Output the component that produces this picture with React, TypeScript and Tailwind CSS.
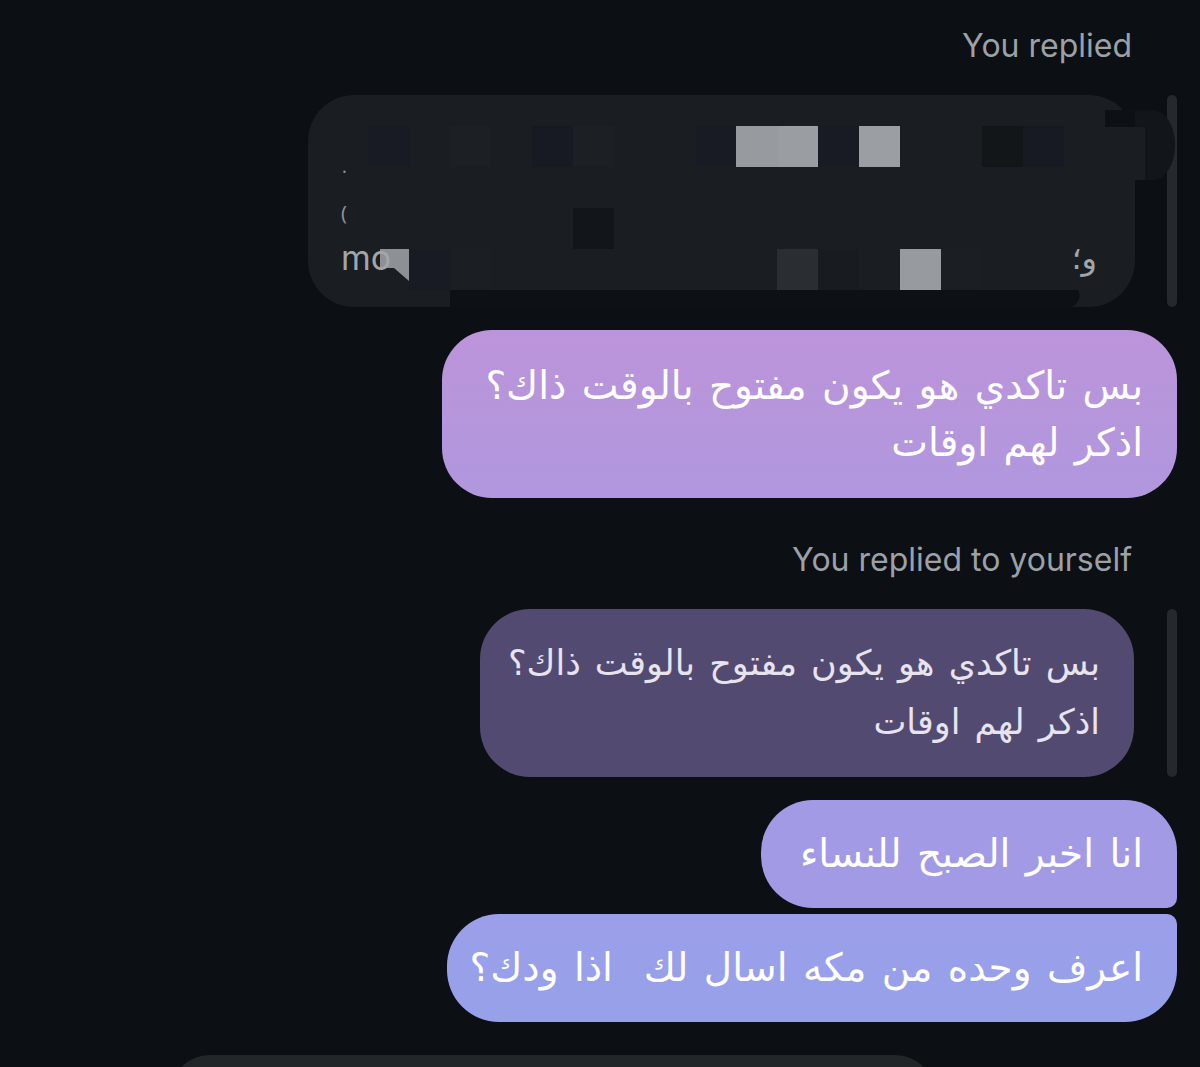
import React from 'react';

const arabic = "font-['DejaVu_Sans',sans-serif] [word-spacing:3px] whitespace-nowrap";
const label = "font-['Inter',sans-serif] text-[32px] leading-none text-[#9ca1a7]";

// Pixel mosaic that hides the quoted message
const Mosaic: React.FC = () => (
  <svg
    width={827}
    height={212}
    viewBox="0 0 827 212"
    className="absolute left-0 top-0 overflow-visible"
  >
    {/* top row, faint blocks */}
    <rect x={60} y={31} width={42} height={41} fill="#181b24" />
    <rect x={142} y={31} width={41} height={41} fill="#1c1f23" />
    <rect x={224} y={31} width={41} height={41} fill="#171a22" />
    <rect x={265} y={31} width={41} height={41} fill="#1c1f23" />
    <rect x={388} y={31} width={41} height={41} fill="#181b23" />
    <rect x={428} y={31} width={42} height={41} fill="#979a9e" />
    <rect x={470} y={31} width={40} height={41} fill="#9a9da1" />
    <rect x={510} y={31} width={41} height={41} fill="#181b24" />
    <rect x={551} y={31} width={41} height={41} fill="#9b9ea2" />
    <rect x={674} y={31} width={41} height={41} fill="#131619" />
    <rect x={715} y={31} width={41} height={41} fill="#171a22" />
    {/* top right notch */}
    <rect x={797} y={15} width={30} height={17} fill="#0d1014" />
    <path d="M827 15 H845 A22 35 0 0 1 845 85 H827 Z" fill="#121519" />
    <rect x={797} y={32} width={40} height={53} fill="#1a1d21" />
    {/* middle row */}
    <rect x={265} y={113} width={41} height={41} fill="#121519" />
    {/* bottom row */}
    <rect x={101} y={154} width={41} height={41} fill="#181b24" />
    <rect x={142} y={154} width={41} height={41} fill="#1b1e22" />
    <rect x={469} y={154} width={41} height={41} fill="#2a2d31" />
    <rect x={510} y={154} width={41} height={41} fill="#181b1f" />
    <rect x={592} y={154} width={41} height={41} fill="#979a9e" />
    <rect x={633} y={154} width={41} height={41} fill="#1b1e22" />
    {/* cut strip under the bubble */}
    <path d="M142 195 H770 Q775 205 764 212 H142 Z" fill="#0d1014" />
    {/* grey corner over the latin word */}
    <path d="M72 154 H101 V186 L86 173 H72 Z" fill="#8d9196" />
  </svg>
);

const Scrollbar: React.FC = () => (
  <div className="w-[10px] shrink-0 rounded-full bg-[#25282c]" />
);

export default function App() {
  return (
    <div className="h-[1067px] w-full overflow-hidden bg-[#0c0f14] pr-[23px]">
      <div className="flex flex-col items-end">
        <div className={`${label} mt-[30px] mr-[45px]`}>You replied</div>

        {/* quoted, hidden message */}
        <div className="mt-[33px] flex h-[212px] gap-[32px]">
          <div className="relative w-[827px] rounded-[46px] bg-[#1a1d21]">
            <Mosaic />
            <span className="absolute left-[34px] top-[62px] text-[18px] leading-none text-[#8d9196]">.</span>
            <span className="absolute left-[33px] top-[108px] text-[20px] leading-none text-[#8d9196]">(</span>
            <span className="absolute left-[33px] top-[146px] font-['Inter',sans-serif] text-[34px] leading-none text-[#a2a6ab]">
              mo
            </span>
            <span
              dir="rtl"
              className={`${arabic} absolute right-[38px] top-[147px] text-[32px] leading-none text-[#a2a6ab]`}
            >
              و؛
            </span>
          </div>
          <Scrollbar />
        </div>

        <div
          dir="rtl"
          className={`${arabic} mt-[23px] flex h-[168px] w-[735px] flex-col justify-center rounded-[50px] bg-gradient-to-b from-[#bc94da] to-[#b097de] px-[34px] text-[39px] leading-[57px] text-white`}
        >
          <div>بس تاكدي هو يكون مفتوح بالوقت ذاك؟</div>
          <div>اذكر لهم اوقات</div>
        </div>

        <div className={`${label} mt-[46px] mr-[45px]`}>You replied to yourself</div>

        {/* quote of own message */}
        <div className="mt-[33px] flex h-[168px] gap-[33px]">
          <div
            dir="rtl"
            className={`${arabic} flex w-[654px] flex-col justify-center rounded-[50px] bg-[#534a71] px-[34px] text-[35px] leading-[59px] text-[#e7e3ef]`}
          >
            <div>بس تاكدي هو يكون مفتوح بالوقت ذاك؟</div>
            <div>اذكر لهم اوقات</div>
          </div>
          <Scrollbar />
        </div>

        <div
          dir="rtl"
          className={`${arabic} mt-[23px] flex h-[108px] w-[416px] items-center rounded-[52px] rounded-br-[10px] bg-[#a39ae6] px-[34px] text-[39px] text-white`}
        >
          انا اخبر الصبح للنساء
        </div>
        <div
          dir="rtl"
          className={`${arabic} mt-[6px] flex h-[108px] w-[730px] items-center rounded-[52px] rounded-tr-[10px] bg-gradient-to-b from-[#9c9ee9] to-[#96a1ea] px-[34px] text-[39px] text-white`}
        >
          اعرف وحده من مكه اسال لك&nbsp; اذا ودك؟
        </div>
      </div>

      {/* composer peeking at the bottom */}
      <div className="ml-[170px] mt-[33px] h-[60px] w-[765px] rounded-t-[40px] bg-[#222629]" />
    </div>
  );
}
